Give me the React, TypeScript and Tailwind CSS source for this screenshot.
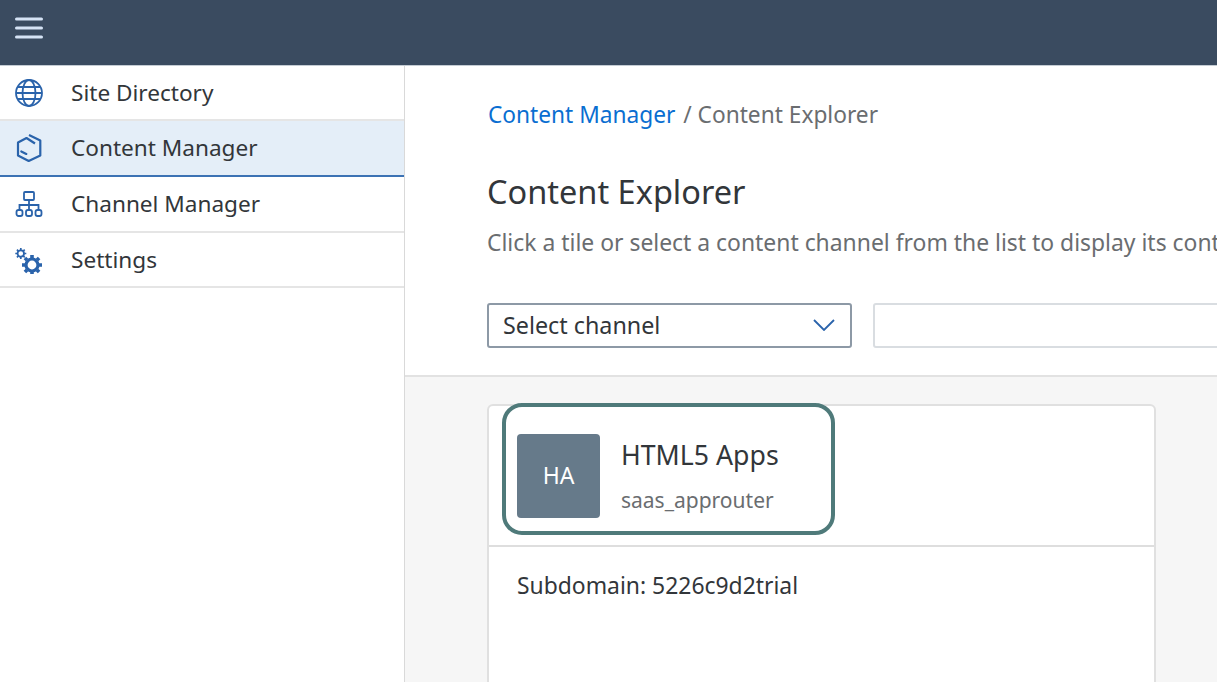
const navItems = [
  { label: "Site Directory", icon: <GlobeIcon />, rowClass: "h-[55px] pt-px border-[#e5e5e5]" },
  { label: "Content Manager", icon: <BoxIcon />, rowClass: "h-[56px] border-[#3c72b4] bg-[#e4eef8]" },
  { label: "Channel Manager", icon: <TreeIcon />, rowClass: "h-[56px] border-[#e5e5e5]" },
  { label: "Settings", icon: <GearsIcon />, rowClass: "h-[55px] pt-px border-[#e5e5e5]" },
];

function MenuIcon() {
  return (
    <svg viewBox="0 0 28 22" className="h-[22px] w-7" fill="none" stroke="#d5e3f5" strokeWidth="3" strokeLinecap="round">
      <path d="M1.5 2h25M1.5 11h25M1.5 20h25" />
    </svg>
  );
}

function GlobeIcon() {
  return (
    <svg viewBox="0 0 28 28" className="h-7 w-7" fill="none" stroke="#2a63ab" strokeWidth="1.8">
      <circle cx="14" cy="14" r="13" />
      <ellipse cx="14" cy="14" rx="6.5" ry="13" />
      <path d="M3 8h22M3 20h22M1 14h26" />
    </svg>
  );
}

function BoxIcon() {
  return (
    <svg viewBox="0 0 28 28" className="h-7 w-7" fill="none" stroke="#2a63ab" strokeWidth="2.2" strokeLinejoin="round">
      <path d="M20 9.5 11.5 4 3 8.5v13l10.7 5.5 11.6-5.5V6.5L14 1" />
      <path d="M6.3 17.5l5 2.4" strokeLinecap="round" />
    </svg>
  );
}

function TreeIcon() {
  return (
    <svg viewBox="0 0 28 28" className="h-7 w-7" fill="none" stroke="#2a63ab" strokeWidth="1.8">
      <rect x="9" y="2" width="10" height="8" rx="1" />
      <path d="M14 10v5M4.5 20v-5h19v5M14 15v5" />
      <rect x="1.5" y="20" width="6" height="6" rx="2" />
      <rect x="11" y="20" width="6" height="6" rx="2" />
      <rect x="20.5" y="20" width="6" height="6" rx="2" />
    </svg>
  );
}

function GearsIcon() {
  return (
    <svg viewBox="0 0 28 28" className="h-7 w-7" fill="none" stroke="#2a63ab">
      <circle cx="5.8" cy="7.5" r="3.2" strokeWidth="1.8" />
      <path
        d="M5.8 2v2M5.8 11v2M0.3 7.5h2M9.3 7.5h2M1.9 3.6l1.4 1.4M8.3 10l1.4 1.4M9.7 3.6 8.3 5M3.3 10l-1.4 1.4"
        strokeWidth="1.7"
      />
      <circle cx="17" cy="19" r="6" strokeWidth="3.2" />
      <path
        d="M17 9v3M17 26v3M7 19h3M24 19h3M9.9 11.9l2.1 2.1M22 24l2.1 2.1M24.1 11.9 22 14M12 24l-2.1 2.1"
        strokeWidth="3.6"
      />
    </svg>
  );
}

export default function App() {
  return (
    <div className="flex h-[682px] w-[1217px] flex-col overflow-hidden bg-white font-['Noto_Sans','Open_Sans',sans-serif] text-[#32363a]">
      <header className="flex h-[66px] shrink-0 items-center border-b border-[#c4ccd4] bg-[#3a4b60] pb-[10px] pl-[15px]">
        <MenuIcon />
      </header>

      <div className="flex min-h-0 flex-1">
        <aside className="w-[405px] shrink-0 border-r border-[#d9d9d9]">
          {navItems.map((item) => (
            <div
              key={item.label}
              className={`flex items-center gap-[28px] border-b-2 pl-[15px] text-[22.6px] ${item.rowClass}`}
            >
              <span className="flex h-7 w-7 items-center justify-center">{item.icon}</span>
              <span>{item.label}</span>
            </div>
          ))}
        </aside>

        <main className="flex min-w-0 flex-1 flex-col">
          <section className="h-[311px] shrink-0 overflow-hidden border-b-2 border-[#e2e2e2] pl-[82px] pt-[33px]">
            <p className="whitespace-nowrap pl-px text-[22.7px] leading-[32px] text-[#6a6d70]">
              <span className="text-[#0a6ed1]">Content Manager</span>
              <span className="ml-[2px]"> / Content Explorer</span>
            </p>
            <h1 className="mt-[39px] whitespace-nowrap text-[32.5px] leading-[44px]">Content Explorer</h1>
            <p className="mt-[13px] whitespace-nowrap text-[22.9px] leading-[32px] text-[#6a6d70]">
              Click a tile or select a content channel from the list to display its content
            </p>
            <div className="mt-[44px] flex gap-[21px]">
              <div className="flex h-[45px] w-[365px] shrink-0 items-center justify-between rounded-[3px] border-2 border-[#8d99a6] pb-px pl-[14px] pr-[15px] text-[23.3px]">
                <span>Select channel</span>
                <svg viewBox="0 0 22 12" className="h-3 w-[22px]" fill="none" stroke="#2a63ab" strokeWidth="1.8">
                  <path d="M1 1l10 10L21 1" />
                </svg>
              </div>
              <div className="h-[45px] w-[500px] shrink-0 rounded-[3px] border-2 border-[#d9dde1]" />
            </div>
          </section>

          <section className="min-h-0 flex-1 bg-[#f6f6f6] pl-[82px] pt-[27px]">
            <div className="relative h-[400px] w-[669px] rounded-[6px] border-2 border-[#e0e0e0] bg-white">
              <div className="flex h-[141px] items-center gap-[21px] border-b-2 border-[#dedede] pl-[28px]">
                <div className="flex h-[84px] w-[83px] items-center justify-center rounded-[4px] bg-[#667a8a] text-[23px] text-white">
                  HA
                </div>
                <div className="pb-px">
                  <p className="text-[26.7px] leading-[36px]">HTML5 Apps</p>
                  <p className="mt-[13px] text-[21px] leading-[28px] text-[#6a6d70]">saas_approuter</p>
                </div>
              </div>
              <p className="pl-[28px] pt-[23px] text-[22.9px] leading-[32px]">Subdomain: 5226c9d2trial</p>
              <div className="absolute left-[13px] top-[-3px] h-[132px] w-[333px] rounded-[20px] border-[4px] border-[#4f7a7a]" />
            </div>
          </section>
        </main>
      </div>
    </div>
  );
}
